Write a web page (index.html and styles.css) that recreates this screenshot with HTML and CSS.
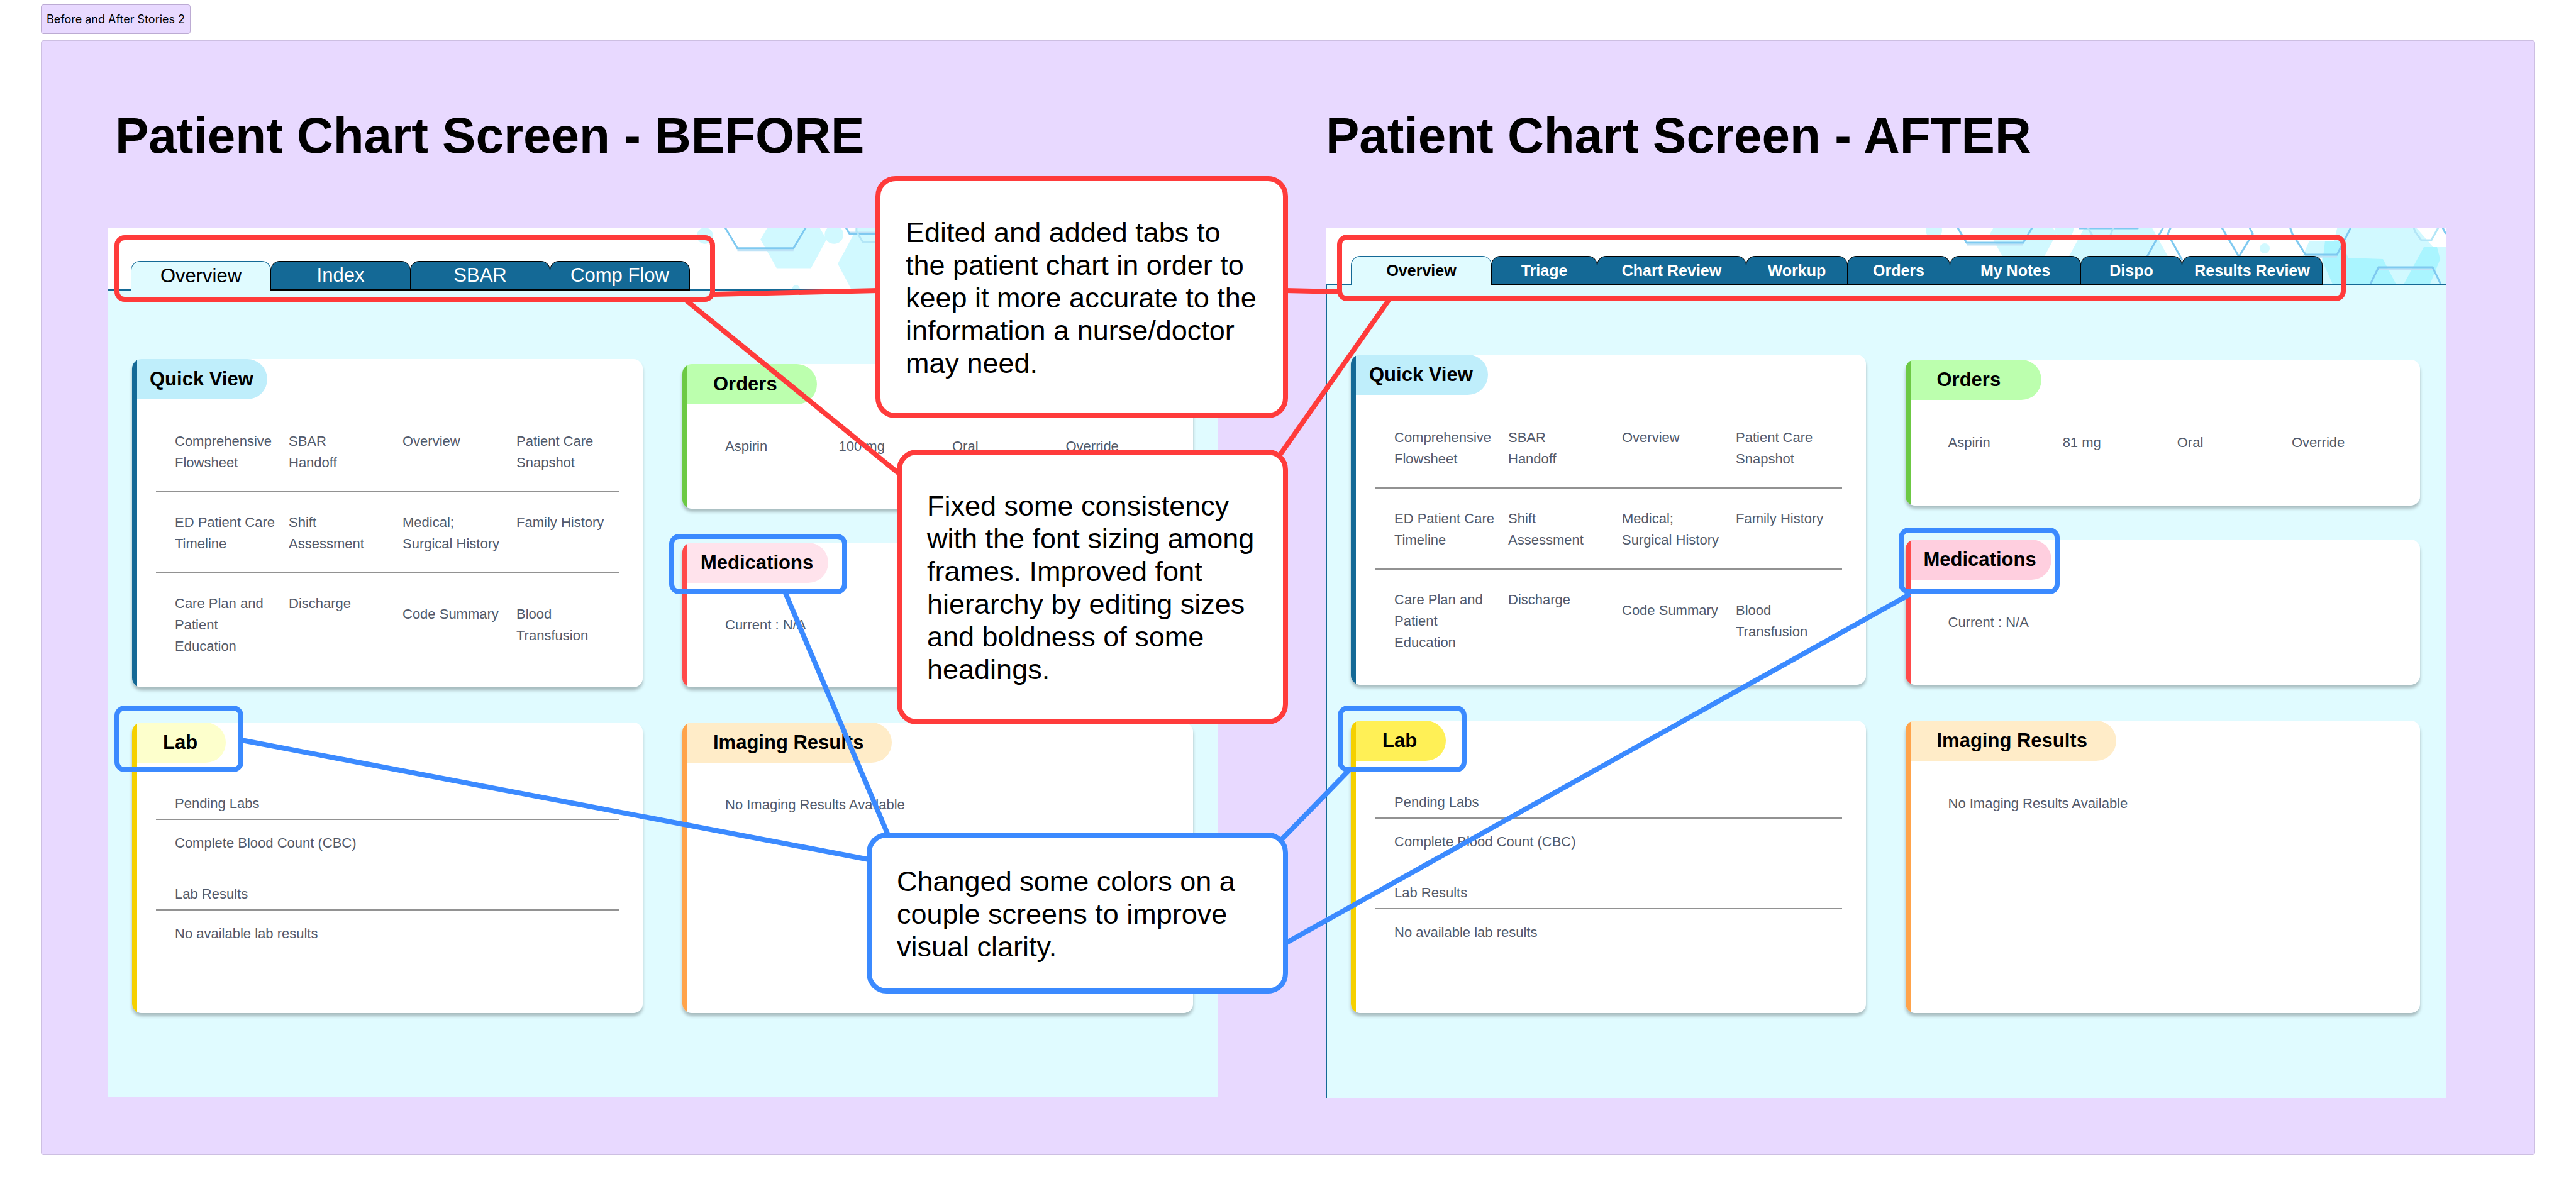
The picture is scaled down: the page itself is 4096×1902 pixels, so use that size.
FILE: index.html
```html
<!DOCTYPE html>
<html lang="en">
<head>
<meta charset="utf-8">
<title>Before and After Stories 2</title>
<link rel="stylesheet" href="styles.css">
</head>
<body>
<div class="section-label">Before and After Stories 2</div>
<main class="board">
  <section class="story before">
    <h1 class="story-title">Patient Chart Screen - BEFORE</h1>
    <div class="screen">
      <header class="screen-header">
        <svg class="hexes" viewBox="0 0 1781 100" preserveAspectRatio="xMinYMin slice" aria-hidden="true">
          <defs>
            <g id="hex-art">
              <g fill="#d1f9ff">
                <circle cx="967" cy="4" r="13"/>
                <circle cx="1174" cy="2" r="15"/>
                <circle cx="1113" cy="89" r="6"/>
                <circle cx="1493" cy="33" r="8"/>
                <path d="M1056 10 1070-14H1148L1162 10 1137 56H1082Z"/>
                <path d="M1180 49 1209-5 1214-14H1306L1341 49 1310 104H1209Z"/>
                <path d="M1611-10H1729L1734 0 1761 31H1781V102H1584V48L1553 46 1564 21H1603Z"/>
              </g>
              <g fill="#aaf5ff">
                <path d="M1589 21H1614L1626 48 1681 50 1703 92H1602L1585 54Z"/>
                <path d="M1746 31H1767L1772 50 1755 92H1713Z"/>
              </g>
              <g fill="none" stroke="#bfe2f6" stroke-width="3">
                <path d="M1019 27H1109M1199 -1H1291M1674 66H1760M1558 46H1608"/>
              </g>
              <g fill="none" stroke="#7fc9f0" stroke-width="3">
                <path d="M994-18 1019 24H1109L1134-18"/>
                <path d="M1190-14 1199 1H1291L1297-14"/>
                <path d="M1337-10 1306 46M1348-10 1339 10 1362 52"/>
                <path d="M1419-10 1452 46 1474 10 1464-10"/>
                <path d="M1530-10 1537 10 1558 43H1608L1635-10"/>
                <path d="M1660 92 1674 63H1760L1774 92M1776 0 1781 10"/>
              </g>
              <g fill="none" stroke="#b3e6f7" stroke-width="3">
                <path d="M1210-14V-3L1220 14H1247L1256-10"/>
                <path d="M1727-10 1732 6 1742 20H1758L1769 0"/>
              </g>
            </g>
          </defs>
          <use href="#hex-art" transform="translate(-9 9)"/>
        </svg>
        <nav class="tabs" aria-label="Chart before">
          <button class="tab active">Overview</button>
          <button class="tab">Index</button>
          <button class="tab">SBAR</button>
          <button class="tab">Comp Flow</button>
        </nav>
      </header>
      <div class="cards">
        <article class="card quick">
          <h2 class="pill tight">Quick View</h2>
          <div class="quick-rows">
            <ul class="quick-row">
              <li>Comprehensive<br>Flowsheet</li><li>SBAR<br>Handoff</li><li>Overview</li><li>Patient Care<br>Snapshot</li>
            </ul>
            <ul class="quick-row">
              <li>ED Patient Care<br>Timeline</li><li>Shift<br>Assessment</li><li>Medical;<br>Surgical History</li><li>Family History</li>
            </ul>
            <ul class="quick-row">
              <li>Care Plan and<br>Patient<br>Education</li><li>Discharge</li><li class="low">Code Summary</li><li class="low">Blood<br>Transfusion</li>
            </ul>
          </div>
        </article>
        <div class="stack">
          <article class="card orders">
            <h2 class="pill">Orders</h2>
            <table class="order-table"><tr><td>Aspirin</td><td>100 mg</td><td>Oral</td><td>Override</td></tr></table>
          </article>
          <article class="card meds">
            <h2 class="pill tight">Medications</h2>
            <p class="note">Current : N/A</p>
          </article>
        </div>
        <article class="card lab">
          <h2 class="pill">Lab</h2>
          <dl class="lab-list">
            <dt>Pending Labs</dt><dd>Complete Blood Count (CBC)</dd>
            <dt>Lab Results</dt><dd>No available lab results</dd>
          </dl>
        </article>
        <article class="card imaging">
          <h2 class="pill">Imaging Results</h2>
          <p class="note">No Imaging Results Available</p>
        </article>
      </div>
    </div>
  </section>

  <section class="story after">
    <h1 class="story-title">Patient Chart Screen - AFTER</h1>
    <div class="screen">
      <header class="screen-header">
        <svg class="hexes" viewBox="0 0 1781 90" preserveAspectRatio="xMinYMin slice" aria-hidden="true">
          <use href="#hex-art"/>
        </svg>
        <nav class="tabs" aria-label="Chart after">
          <button class="tab active">Overview</button>
          <button class="tab">Triage</button>
          <button class="tab">Chart Review</button>
          <button class="tab">Workup</button>
          <button class="tab">Orders</button>
          <button class="tab">My Notes</button>
          <button class="tab">Dispo</button>
          <button class="tab">Results Review</button>
        </nav>
      </header>
      <div class="cards">
        <article class="card quick">
          <h2 class="pill tight">Quick View</h2>
          <div class="quick-rows">
            <ul class="quick-row">
              <li>Comprehensive<br>Flowsheet</li><li>SBAR<br>Handoff</li><li>Overview</li><li>Patient Care<br>Snapshot</li>
            </ul>
            <ul class="quick-row">
              <li>ED Patient Care<br>Timeline</li><li>Shift<br>Assessment</li><li>Medical;<br>Surgical History</li><li>Family History</li>
            </ul>
            <ul class="quick-row">
              <li>Care Plan and<br>Patient<br>Education</li><li>Discharge</li><li class="low">Code Summary</li><li class="low">Blood<br>Transfusion</li>
            </ul>
          </div>
        </article>
        <div class="stack">
          <article class="card orders">
            <h2 class="pill">Orders</h2>
            <table class="order-table"><tr><td>Aspirin</td><td>81 mg</td><td>Oral</td><td>Override</td></tr></table>
          </article>
          <article class="card meds">
            <h2 class="pill tight">Medications</h2>
            <p class="note">Current : N/A</p>
          </article>
        </div>
        <article class="card lab">
          <h2 class="pill">Lab</h2>
          <dl class="lab-list">
            <dt>Pending Labs</dt><dd>Complete Blood Count (CBC)</dd>
            <dt>Lab Results</dt><dd>No available lab results</dd>
          </dl>
        </article>
        <article class="card imaging">
          <h2 class="pill">Imaging Results</h2>
          <p class="note">No Imaging Results Available</p>
        </article>
      </div>
    </div>
  </section>
</main>

<svg class="connectors" width="4096" height="1902" viewBox="0 0 4096 1902" aria-hidden="true">
  <g class="line-red">
    <path d="M1135 468 1396 462M1089 476 1428 752M2044 462 2130 464M2209 476 2034 725"/>
  </g>
  <g class="line-blue">
    <path d="M1248 941 1413 1330M384 1177 1382 1367M2035 1338 2146 1224M2044 1500 3037 945"/>
  </g>
</svg>
<div class="frame red tabs-before"></div>
<div class="frame red tabs-after"></div>
<div class="frame blue lab-before"></div>
<div class="frame blue meds-before"></div>
<div class="frame blue lab-after"></div>
<div class="frame blue meds-after"></div>
<p class="callout red callout-tabs">Edited and added tabs to the patient chart in order to keep it more accurate to the information a nurse/doctor may need.</p>
<p class="callout red callout-fonts">Fixed some consistency with the font sizing among frames. Improved font hierarchy by editing sizes and boldness of some headings.</p>
<p class="callout blue callout-colors">Changed some colors on a couple screens to improve visual clarity.</p>
</body>
</html>
```
FILE: styles.css
```css
* {
  box-sizing: border-box;
}

body {
  position: relative;
  margin: 0;
  padding: 7px 65px 65px;
  background: #fff;
  color: #000;
  font-family: "Liberation Sans", Arial, sans-serif;
}

h1, h2, p, ul, dl, dd {
  margin: 0;
  padding: 0;
}

ul {
  list-style: none;
}

.section-label {
  width: max-content;
  margin-bottom: 10px;
  padding: 0 8px;
  border: 1px solid #bcabd3;
  border-radius: 4px;
  background: #e8d9ff;
  font: 18px/45px Inter, sans-serif;
}

.board {
  display: grid;
  grid-template-columns: 1766fr 1781fr;
  column-gap: 171px;
  padding: 105px 141px 90px 105px;
  border: 1px solid #cdbfe2;
  border-radius: 4px;
  background: #e8d9ff;
}

.story-title {
  margin-bottom: 100px;
  font-size: 80px;
  line-height: 92px;
  white-space: nowrap;
}

.before .story-title {
  padding-left: 12px;
}

/* Chart screens */

.screen {
  background: #e0fbff;
}

.after .screen {
  background: linear-gradient(to right, #146996 2px, #e0fbff 2px);
}

.screen-header {
  position: relative;
  display: flex;
  align-items: flex-end;
  height: 100px;
  padding-left: 37px;
  border-bottom: 2px solid #146996;
  background: #fff;
}

.after .screen-header {
  height: 92px;
  padding-left: 40px;
}

.hexes {
  position: absolute;
  top: 0;
  left: 0;
  width: 100%;
  height: 100%;
}

.tabs {
  position: relative;
  display: flex;
  margin-bottom: -2px;
}

.tab {
  width: 223px;
  height: 47px;
  margin: 0 -1px 0 0;
  padding: 0;
  border: 1px solid #000;
  border-width: 1px 1px 2px;
  border-radius: 15px 15px 0 0;
  background: #146996;
  color: #fff;
  font: 31px/44px "Liberation Sans", Arial, sans-serif;
}

.tab.active {
  border-color: #146996;
  border-bottom: 0;
  background: #e0fbff;
  color: #000;
}

.after .tab {
  font-size: 25px;
  font-weight: bold;
}

.after .tab.active {
  width: 224px;
  padding-bottom: 6px;
}

.after .tab:nth-child(2) { width: 169px; }
.after .tab:nth-child(3) { width: 238px; }
.after .tab:nth-child(4) { width: 162px; }
.after .tab:nth-child(5) { width: 164px; }
.after .tab:nth-child(6) { width: 209px; }
.after .tab:nth-child(7) { width: 162px; }
.after .tab:nth-child(8) { width: 224px; }

.cards {
  display: grid;
  grid-template-columns: 1fr 1fr;
  grid-template-rows: 522px 462px;
  gap: 56px 63px;
  padding: 109px 40px 134px 39px;
}

.after .cards {
  grid-template-rows: 525px 465px;
  row-gap: 57px;
  padding: 110px 41px 135px 40px;
}

.stack {
  display: flex;
  flex-direction: column;
  gap: 54px;
  padding-top: 8px;
}

.stack .card {
  flex: 1;
}

/* Cards */

.card {
  --accent: #146996;
  --tint: #bfeefb;
  --body-gap: 50px;
  --indent: 30px;
  overflow: hidden;
  padding-left: 8px;
  border-radius: 15px;
  background: linear-gradient(to right, var(--accent) 8px, #fff 8px);
  box-shadow: 0 5px 5px rgba(0, 0, 0, 0.25);
  color: #525a6b;
  font-size: 22px;
  line-height: 34px;
}

.after .card {
  --body-gap: 51px;
  --indent: 31px;
}

.orders { --accent: #6cc944; --tint: #bcffae; }
.meds { --accent: #ff4a4a; --tint: #ffe3ec; }
.lab { --accent: #f5d000; --tint: #fdffcc; }
.imaging { --accent: #ffa34a; --tint: #ffecc8; }
.after .meds { --tint: #ffcfdf; }
.after .lab { --tint: #fff056; }

.pill {
  width: max-content;
  padding: 0 45px 0 41px;
  border-radius: 0 32px 32px 0;
  background: var(--tint);
  color: #000;
  font-size: 31px;
  line-height: 64px;
}

.pill.tight {
  padding: 0 22px 0 20px;
}

.meds .pill.tight {
  padding: 0 24px 0 21px;
}

.after .pill {
  padding: 0 46px 0 42px;
}

.after .pill.tight {
  padding: 0 24px 0 21px;
}

.before .orders .pill {
  min-width: 206px;
}

.after .orders .pill {
  min-width: 208px;
}

.quick-rows {
  padding: 0 38px 0 30px;
}

.quick-row {
  display: grid;
  grid-template-columns: repeat(3, 181px) 1fr;
  padding: 31px 0 28px var(--indent);
  border-bottom: 2px solid #929292;
  white-space: nowrap;
}

.quick-row:first-child {
  padding-top: var(--body-gap);
}

.quick-row:last-child {
  border-bottom: 0;
}

.low {
  padding-top: 17px;
}

.order-table {
  width: calc(100% - 82px);
  margin: var(--body-gap) 22px 0 60px;
  border-spacing: 0;
  table-layout: fixed;
}

.order-table td {
  padding: 0;
}

.note {
  padding: var(--body-gap) 0 0 60px;
}

.lab-list {
  padding: 48px 38px 0 30px;
}

.after .lab-list {
  padding-top: 49px;
}

.lab-list dt {
  padding: 0 0 7px var(--indent);
  border-bottom: 2px solid #929292;
}

.lab-list dd {
  padding: 20px 0 0 var(--indent);
}

.lab-list dd + dt {
  padding-top: 47px;
}

/* Annotations, placed freely on the board */

.red { --ink: #ff3b3b; }
.blue { --ink: #3b8aff; }

.connectors {
  position: absolute;
  top: 0;
  left: 0;
  fill: none;
  stroke-width: 8px;
}

.line-red { stroke: #ff3b3b; }
.line-blue { stroke: #3b8aff; }

.frame {
  position: absolute;
  border: 8px solid var(--ink);
  border-radius: 16px;
}

.tabs-before { left: 182px; top: 374px; width: 955px; height: 106px; }
.tabs-after { left: 2126px; top: 373px; width: 1604px; height: 106px; }
.lab-before { left: 182px; top: 1122px; width: 205px; height: 106px; }
.meds-before { left: 1064px; top: 849px; width: 283px; height: 96px; }
.lab-after { left: 2127px; top: 1122px; width: 205px; height: 106px; }
.meds-after { left: 3019px; top: 839px; width: 256px; height: 106px; }

.callout {
  position: absolute;
  padding: 56px 34px 53px 40px;
  border: 8px solid var(--ink);
  border-radius: 32px;
  background: #fff;
  font-size: 45px;
  line-height: 52px;
}

.callout-tabs { left: 1392px; top: 280px; width: 656px; }
.callout-fonts { left: 1426px; top: 715px; width: 622px; }
.callout-colors {
  left: 1378px;
  top: 1324px;
  width: 670px;
  padding-top: 44px;
  padding-bottom: 40px;
}
```
